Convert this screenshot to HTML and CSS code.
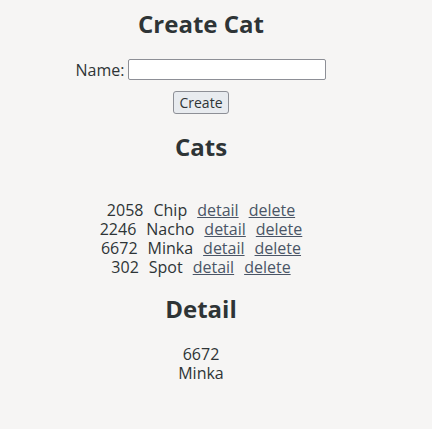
FILE: index.html
```html
<!DOCTYPE html>
<html>
<head>
<meta charset="utf-8">
<link rel="stylesheet" href="styles.css">
</head>
<body>
<main class="page">
  <h2 class="title title-create">Create Cat</h2>
  <form class="form">
    <label class="field"><span>Name:</span><input class="input" type="text"></label>
    <button class="btn" type="button">Create</button>
  </form>
  <h2 class="title title-cats">Cats</h2>
  <ul class="list">
    <li class="row"><span>2058</span><span>Chip</span><a href="#">detail</a><a href="#">delete</a></li>
    <li class="row"><span>2246</span><span>Nacho</span><a href="#">detail</a><a href="#">delete</a></li>
    <li class="row"><span>6672</span><span>Minka</span><a href="#">detail</a><a href="#">delete</a></li>
    <li class="row"><span>302</span><span>Spot</span><a href="#">detail</a><a href="#">delete</a></li>
  </ul>
  <h2 class="title title-detail">Detail</h2>
  <div class="detail">
    <div>6672</div>
    <div>Minka</div>
  </div>
</main>
</body>
</html>
```

FILE: styles.css
```css
html, body {
  margin: 0;
  padding: 0;
  background: #f6f5f4;
}
body {
  font-family: "Open Sans", "Noto Sans", sans-serif;
  font-size: 16px;
  color: #2e3436;
}
.page {
  width: 402px;
  display: flex;
  flex-direction: column;
  align-items: center;
  text-align: center;
}
.title {
  margin: 0;
  font-size: 24px;
  line-height: 28px;
  font-weight: 700;
}
.title-create { margin-top: 10px; }
.title-cats { margin-top: 19px; }
.title-detail { margin-top: 18px; }
.form {
  display: flex;
  flex-direction: column;
  align-items: center;
  margin-top: 21px;
  gap: 11px;
}
.field {
  display: flex;
  align-items: center;
  gap: 4px;
  line-height: 20px;
}
.input {
  width: 198px;
  height: 21px;
  box-sizing: border-box;
  border: 1px solid #8d8f96;
  border-radius: 2px;
  background: #fff;
  padding: 0 4px;
  font: inherit;
}
.btn {
  font: inherit;
  font-size: 14px;
  line-height: 20px;
  color: #2e3436;
  width: 56px;
  height: 23px;
  padding: 0;
  background: #e8ebef;
  border: 1px solid #8d8f96;
  border-radius: 3px;
}
.list {
  list-style: none;
  margin: 40px 0 0;
  padding: 0;
}
.row {
  display: flex;
  justify-content: center;
  gap: 10px;
  line-height: 19px;
}
.row a {
  color: #4a5566;
  text-decoration: underline;
}
.detail {
  margin-top: 22px;
  line-height: 19px;
}
```
